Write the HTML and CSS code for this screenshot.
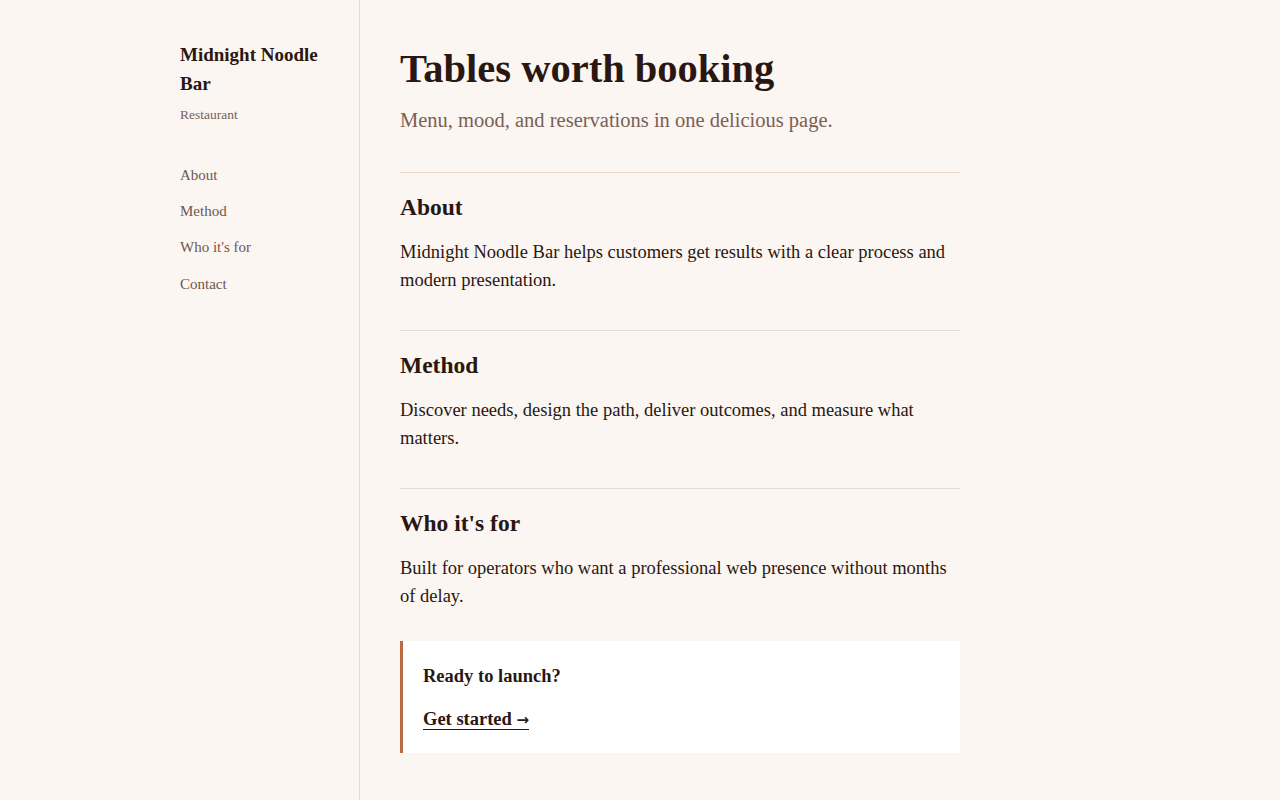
FILE: index.html
```html
<!DOCTYPE html>
<html lang="en">
<head>
<meta charset="utf-8">
<title>Midnight Noodle Bar</title>
<link rel="stylesheet" href="styles.css">
</head>
<body>
<div class="layout">
  <aside class="sidebar">
    <div class="brand">Midnight Noodle Bar</div>
    <div class="tagline">Restaurant</div>
    <nav class="nav">
      <a href="#about">About</a>
      <a href="#method">Method</a>
      <a href="#who">Who it's for</a>
      <a href="#contact">Contact</a>
    </nav>
  </aside>
  <main class="main">
    <header class="hero">
      <h1>Tables worth booking</h1>
      <p class="lede">Menu, mood, and reservations in one delicious page.</p>
    </header>
    <section class="section" id="about">
      <h2>About</h2>
      <p>Midnight Noodle Bar helps customers get results with a clear process and modern presentation.</p>
    </section>
    <section class="section" id="method">
      <h2>Method</h2>
      <p>Discover needs, design the path, deliver outcomes, and measure what matters.</p>
    </section>
    <section class="section" id="who">
      <h2>Who it's for</h2>
      <p>Built for operators who want a professional web presence without months of delay.</p>
    </section>
    <div class="cta" id="contact">
      <p class="cta-title">Ready to launch?</p>
      <a class="cta-link" href="#contact">Get started <span class="arrow">→</span></a>
    </div>
  </main>
</div>
</body>
</html>
```
FILE: styles.css
```css
* { box-sizing: border-box; }

html, body {
  margin: 0;
  height: 100%;
}

body {
  background: #fbf6f1;
  color: #2a1712;
  font-family: "Liberation Serif", "DejaVu Serif", serif;
}

.layout {
  display: grid;
  grid-template-columns: 360px 1fr;
  min-height: 100vh;
}

/* left column: brand and section links */
.sidebar {
  border-right: 1px solid #e9d9cc;
  padding: 40px 24px 40px 180px;
}

.brand {
  font-size: 19px;
  font-weight: 700;
  line-height: 29px;
}

.tagline {
  margin-top: 8px;
  font-size: 13.5px;
  line-height: 18px;
  color: #7a6057;
}

.nav {
  margin-top: 41px;
  display: flex;
  flex-direction: column;
  gap: 16.2px;
}

.nav a {
  font-size: 15px;
  line-height: 20px;
  color: #6f574d;
  text-decoration: none;
}

/* right column: page content */
.main {
  padding: 44px 40px 48px 40px;
  width: 640px;
}

.hero h1 {
  margin: 0;
  font-size: 40.5px;
  line-height: 50px;
  font-weight: 700;
}

.lede {
  margin: 11px 0 37px;
  font-size: 20.5px;
  line-height: 30px;
  color: #7a6057;
}

.section {
  border-top: 1px solid #ebd9cb;
  padding: 20px 0 36px;
}

.section h2 {
  margin: 0 0 17px;
  font-size: 23.5px;
  line-height: 28px;
  font-weight: 700;
}

.section p {
  margin: 0;
  font-size: 18.5px;
  line-height: 28px;
}

/* call-to-action card */
.cta {
  margin-top: -5px;
  background: #ffffff;
  border-left: 3px solid #b86a40;
  padding: 25px 20px 23px 20px;
}

.cta-title {
  margin: 0 0 24px;
  font-size: 18.5px;
  line-height: 20px;
  font-weight: 700;
}

.cta-link {
  display: inline-block;
  font-size: 18.5px;
  line-height: 18px;
  font-weight: 700;
  color: #2a1712;
  text-decoration: none;
  border-bottom: 1.5px solid #2a1712;
}

.arrow {
  font-family: "DejaVu Sans", sans-serif;
  font-size: 15px;
  font-weight: 700;
}
```
